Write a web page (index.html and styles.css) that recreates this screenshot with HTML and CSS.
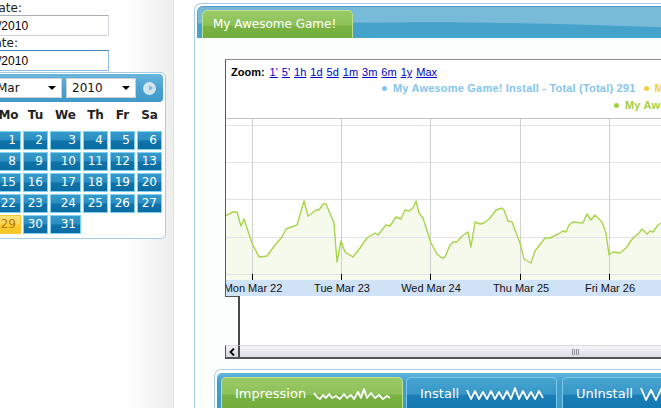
FILE: index.html
```html
<!DOCTYPE html>
<html>
<head>
    <meta charset="UTF-8">
    <title>Game Stats</title>
    <link rel="stylesheet" href="styles.css">
</head>
<body>
    <!-- date filter column -->
    <div class="sidebar">
        <div class="filters">
            <label class="field-label" for="start">Start Date:</label>
            <input class="date-input" type="text" id="start" value="03/22/2010">
            <label class="field-label end" for="end">End Date:</label>
            <input class="date-input focused" type="text" id="end" value="03/29/2010">
            <div class="calendar">
                <div class="cal-head">
                    <span class="cal-nav prev"></span>
                    <div class="cal-select month">Mar<span class="caret"></span></div>
                    <div class="cal-select year">2010<span class="caret"></span></div>
                    <span class="cal-nav next"></span>
                </div>
                <div class="cal-grid">
                    <div class="dow">Su</div><div class="dow">Mo</div><div class="dow">Tu</div><div class="dow">We</div><div class="dow">Th</div><div class="dow">Fr</div><div class="dow">Sa</div>
                    <div class="blank"></div><div class="day">1</div><div class="day">2</div><div class="day">3</div><div class="day">4</div><div class="day">5</div><div class="day">6</div>
                    <div class="day">7</div><div class="day">8</div><div class="day">9</div><div class="day">10</div><div class="day">11</div><div class="day">12</div><div class="day">13</div>
                    <div class="day">14</div><div class="day">15</div><div class="day">16</div><div class="day">17</div><div class="day">18</div><div class="day">19</div><div class="day">20</div>
                    <div class="day">21</div><div class="day">22</div><div class="day">23</div><div class="day">24</div><div class="day">25</div><div class="day">26</div><div class="day">27</div>
                    <div class="day">28</div><div class="day today">29</div><div class="day">30</div><div class="day">31</div>
                </div>
            </div>
        </div>
    </div>

    <!-- game panel -->
    <div class="panel">
        <div class="tab-bar">
            <svg class="wave" viewBox="0 0 560 32" preserveAspectRatio="none">
                <path d="M0,17 L200,16 C280,15 380,18 470,21 L560,22 L560,32 L0,32 Z" fill="#45a2cb"/>
            </svg>
            <div class="tab green top-tab">My Awesome Game!</div>
        </div>

        <div class="chart">
            <div class="chart-main">
                <div class="chart-tools">
                    <div class="zoom-row">
                        <b>Zoom:</b>
                        <a href="#">1'</a><a href="#">5'</a><a href="#">1h</a><a href="#">1d</a><a href="#">5d</a><a href="#">1m</a><a href="#">3m</a><a href="#">6m</a><a href="#">1y</a><a href="#">Max</a>
                    </div>
                    <div class="legend-row first">
                        <span class="legend-item blue"><i></i>My Awesome Game! Install - Total (Total) 291</span>
                        <span class="legend-item yellow"><i></i>My Awesome Game! UnInstall - Total (Total) 18</span>
                    </div>
                    <div class="legend-row second">
                        <span class="legend-item green"><i></i>My Awesome Game! Impression - Total (Total) 1520</span>
                    </div>
                </div>
                <svg class="plot" width="480" height="178" viewBox="0 0 480 178">
                    <rect width="480" height="178" fill="#ffffff"/>
                    <polygon fill="#f5faec" points="-1,98 7,94 11,94 15,108 18,101 26,125 33,139 41,138 49,127 56,119 60,111 71,107 78,83 82,98 85,96 90,92 93,92 97,86 100,86 108,105 111,144 115,123 119,134 127,139 134,130 141,120 149,115 152,117 160,107 164,108 170,99 175,101 179,92 183,93 187,90 190,83 193,95 197,100 205,125 211,136 216,140 219,139 224,127 227,124 231,124 236,118 242,114 245,129 249,104 254,106 258,105 264,100 270,92 276,90 278,92 282,103 286,104 294,125 298,141 305,145 309,133 313,128 319,120 324,120 332,116 337,113 340,114 343,107 347,104 357,105 361,96 365,102 369,97 376,104 380,115 383,137 387,134 394,135 400,130 407,120 413,115 416,111 421,116 424,113 427,114 432,107 435,105 445,98 455,95 470,110 480,112 480,162 -1,162"/>
                    <g stroke="#e2e2ef" stroke-width="1">
                        <line x1="0" y1="7.5" x2="480" y2="7.5"/>
                        <line x1="0" y1="44.5" x2="480" y2="44.5"/>
                        <line x1="0" y1="81.5" x2="480" y2="81.5"/>
                        <line x1="0" y1="119.5" x2="480" y2="119.5"/>
                        <line x1="0" y1="156.5" x2="480" y2="156.5"/>
                    </g>
                    <line x1="0" y1="0.5" x2="480" y2="0.5" stroke="#c2c2c2"/>
                    <g stroke="#d0d0d0" stroke-width="1">
                        <line x1="26.5" y1="1" x2="26.5" y2="156"/>
                        <line x1="115.5" y1="1" x2="115.5" y2="156"/>
                        <line x1="204.5" y1="1" x2="204.5" y2="156"/>
                        <line x1="294.5" y1="1" x2="294.5" y2="156"/>
                        <line x1="383.5" y1="1" x2="383.5" y2="156"/>
                        <line x1="472.5" y1="1" x2="472.5" y2="156"/>
                    </g>
                    <polyline fill="none" stroke="#a6d54b" stroke-width="1.4" stroke-linejoin="round" points="-1,98 7,94 11,94 15,108 18,101 26,125 33,139 41,138 49,127 56,119 60,111 71,107 78,83 82,98 85,96 90,92 93,92 97,86 100,86 108,105 111,144 115,123 119,134 127,139 134,130 141,120 149,115 152,117 160,107 164,108 170,99 175,101 179,92 183,93 187,90 190,83 193,95 197,100 205,125 211,136 216,140 219,139 224,127 227,124 231,124 236,118 242,114 245,129 249,104 254,106 258,105 264,100 270,92 276,90 278,92 282,103 286,104 294,125 298,141 305,145 309,133 313,128 319,120 324,120 332,116 337,113 340,114 343,107 347,104 357,105 361,96 365,102 369,97 376,104 380,115 383,137 387,134 394,135 400,130 407,120 413,115 416,111 421,116 424,113 427,114 432,107 435,105 445,98 455,95 470,110 480,112"/>
                    <rect x="0" y="162" width="480" height="16" fill="#d0e2f6"/>
                    <g stroke="#000000" stroke-width="1">
                        <line x1="26.5" y1="156" x2="26.5" y2="162"/>
                        <line x1="115.5" y1="156" x2="115.5" y2="162"/>
                        <line x1="204.5" y1="156" x2="204.5" y2="162"/>
                        <line x1="294.5" y1="156" x2="294.5" y2="162"/>
                        <line x1="383.5" y1="156" x2="383.5" y2="162"/>
                        <line x1="472.5" y1="156" x2="472.5" y2="162"/>
                    </g>
                    <g class="axis-labels" text-anchor="middle">
                        <text x="27" y="174">Mon Mar 22</text>
                        <text x="116" y="174">Tue Mar 23</text>
                        <text x="205" y="174">Wed Mar 24</text>
                        <text x="295" y="174">Thu Mar 25</text>
                        <text x="384" y="174">Fri Mar 26</text>
                        <text x="473" y="174">Sat Mar 27</text>
                    </g>
                </svg>
            </div>
            <div class="chart-foot">
                <div class="foot-gap"></div>
                <div class="foot-body"></div>
            </div>
            <div class="scrollbar">
                <div class="scroll-btn">
                    <svg width="6" height="8" viewBox="0 0 6 8"><polyline points="5,0.5 1.5,4 5,7.5" fill="none" stroke="#000" stroke-width="1.8"/></svg>
                </div>
                <div class="scroll-track"><span class="grip"></span></div>
            </div>
        </div>

        <div class="bottom-tabs">
            <div class="bottom-bar">
                <div class="tab green stat-tab impression">Impression
                    <svg class="spark" width="78" height="14" viewBox="0 0 78 14"><polyline points="1,6 4,10 7,12 10,8 13,11 16,7 19,11 23,9 27,12 31,7 34,11 38,8 41,12 45,5 48,11 51,2 54,11 58,6 62,11 66,8 70,12 74,9 77,11"/></svg>
                </div>
                <div class="tab blue stat-tab install">Install
                    <svg class="spark" width="78" height="14" viewBox="0 0 78 14"><polyline points="1,3 5,12 9,4 13,12 17,5 21,12 25,4 29,12 33,5 37,12 41,4 45,12 49,1 53,12 57,4 61,12 65,5 69,12 73,4 77,11"/></svg>
                </div>
                <div class="tab blue stat-tab uninstall">UnInstall
                    <svg class="spark" width="78" height="14" viewBox="0 0 78 14"><polyline points="1,1 6,13 11,3 16,13 21,2 26,12 31,4 36,13 41,2 46,12 51,5 56,13 61,3 66,12 71,4 77,12"/></svg>
                </div>
            </div>
        </div>
    </div>
</body>
</html>
```

FILE: styles.css
```css
* {
    box-sizing: border-box;
}
html, body {
    margin: 0;
    height: 100%;
    overflow: hidden;
}
body {
    display: flex;
    align-items: flex-start;
    background-color: #ffffff;
    font-family: "DejaVu Sans", Verdana, sans-serif;
    font-size: 12px;
    color: #222222;
}
/* Sidebar with the date pickers */
.sidebar {
    flex: 0 0 174px;
    height: 408px;
    overflow: hidden;
    border-right: 1px solid #e2e2e2;
    background: linear-gradient(to right, #ffffff 72%, #eeeeee);
}
.filters {
    width: 210px;
    margin-left: -36px;
    padding-top: 1px;
}
.field-label {
    display: block;
    width: 96px;
    margin-left: -38px;
    text-align: right;
    white-space: nowrap;
    line-height: 14px;
}
.field-label.end {
    width: 92px;
}
.date-input {
    display: block;
    width: 145px;
    height: 21px;
    margin: 0;
    padding: 0 3px;
    border: 1px solid #d3d6dd;
    border-top-color: #a9adb5;
    font-family: "Liberation Sans", Arial, sans-serif;
    font-size: 12px;
    color: #000000;
    background: #ffffff;
}
.date-input.focused {
    border-color: #8ebde9;
    border-top-color: #3f80b6;
}
.calendar {
    width: 200px;
    margin: 1px 0 0 2px;
    padding: 1px 2px 4px;
    border: 1px solid #a6cde6;
    border-radius: 5px;
    background: #ffffff;
}
.cal-head {
    display: flex;
    align-items: center;
    height: 28px;
    padding: 0 7px 0 4px;
    border-radius: 4px;
    background: linear-gradient(#68b6dd, #4aa2d0 50%, #3f9acb);
}
.cal-nav {
    display: flex;
    align-items: center;
    justify-content: center;
    width: 13px;
    height: 13px;
    border-radius: 50%;
    background: #d3e5ef;
}
.cal-nav::after {
    content: "";
    margin-left: 2px;
    border-left: 4px solid #8ab7d3;
    border-top: 3px solid transparent;
    border-bottom: 3px solid transparent;
}
.cal-nav.prev::after {
    margin: 0 2px 0 0;
    border-left: 0;
    border-right: 4px solid #8ab7d3;
}
.cal-select {
    display: flex;
    align-items: center;
    justify-content: space-between;
    width: 70px;
    height: 20px;
    padding: 0 5px 0 4px;
    border: 1px solid #d0d0d0;
    background: #ffffff;
    color: #111111;
    font-size: 12px;
}
.cal-select.month {
    margin-left: 6px;
}
.cal-select.year {
    margin-left: 4px;
    padding-left: 5px;
}
.cal-nav.next {
    margin-left: 7px;
}
.caret {
    width: 0;
    height: 0;
    border-left: 4px solid transparent;
    border-right: 4px solid transparent;
    border-top: 4px solid #000000;
}
.cal-grid {
    display: grid;
    grid-template-columns: 25px 25px 25px 31px 25px 25px 25px;
    grid-template-rows: 27px repeat(5, 19px);
    column-gap: 2px;
    row-gap: 2px;
}
.dow {
    font-weight: bold;
    text-align: center;
    line-height: 27px;
    color: #222222;
}
.day {
    border: 1px solid #80d1f1;
    padding-right: 4px;
    text-align: right;
    line-height: 17px;
    color: #ffffff;
    background: linear-gradient(#3599c9, #2b8ec2 48%, #0f73a9 52%, #0a6ca3);
}
.day.today {
    border-color: #f5c63a;
    color: #b9780a;
    background: linear-gradient(#fde27e, #fbd652 48%, #f9cb2c 52%, #f7c622);
}
/* Game panel */
.panel {
    flex: 0 0 560px;
    height: 420px;
    margin: 3px 0 0 20px;
    padding: 2px 0 0 2px;
    border: 1px solid #a7cee6;
    border-right: 0;
    border-radius: 7px 0 0 0;
    background: #fcfefe;
}
.tab-bar {
    position: relative;
    display: flex;
    height: 32px;
    padding: 3px 0 0 4px;
    border-top: 1px solid #4f97c4;
    border-left: 1px solid #5aa0c9;
    border-radius: 6px 0 0 0;
    background: #78bbd9;
    overflow: hidden;
}
.wave {
    position: absolute;
    left: 0;
    top: 0;
    width: 100%;
    height: 100%;
}
.tab {
    position: relative;
    display: flex;
    align-items: center;
    border: 1px solid;
    border-bottom: 0;
    border-radius: 5px 5px 0 0;
    color: #ffffff;
}
.tab.green {
    border-color: #bfe08f;
    background: linear-gradient(#99ca67, #8ec259 52%, #79b242 56%, #73ad3b);
}
.tab.blue {
    border-color: #7cc8ea;
    background: linear-gradient(#46a4d0, #3797c7 52%, #1b7eb6 56%, #1379b1);
}
.top-tab {
    width: 151px;
    height: 28px;
    padding: 0 0 1px 10px;
}
/* Chart */
.chart {
    width: 480px;
    margin: 21px 0 0 28px;
}
.chart-main {
    border-top: 1px solid #8e8e8e;
    border-left: 1px solid #5a5a5a;
    background: #ffffff;
}
.chart-tools {
    height: 58px;
    padding: 4px 0 0 5px;
    font-family: "Liberation Sans", Arial, sans-serif;
    font-size: 11px;
}
.zoom-row {
    display: flex;
    gap: 4px;
    line-height: 16px;
    color: #000000;
}
.zoom-row b {
    margin-right: 1px;
}
.zoom-row a {
    color: #0000cc;
    text-decoration: underline;
}
.legend-row {
    display: flex;
    gap: 8px;
    line-height: 17px;
    font-weight: bold;
    letter-spacing: 0.2px;
    white-space: nowrap;
}
.legend-row.first {
    padding-left: 151px;
}
.legend-row.second {
    padding-left: 383px;
}
.legend-item {
    display: flex;
    align-items: center;
}
.legend-item i {
    width: 5px;
    height: 5px;
    margin-right: 6px;
    border-radius: 50%;
    background: currentColor;
}
.legend-item.blue {
    color: #84c5ec;
}
.legend-item.yellow {
    color: #f2cf3e;
}
.legend-item.green {
    color: #a2d043;
}
.plot {
    display: block;
}
.axis-labels {
    font-family: "Liberation Sans", Arial, sans-serif;
    font-size: 11px;
    fill: #111111;
}
.chart-foot {
    display: flex;
    height: 49px;
}
.foot-gap {
    width: 13px;
    border-top: 1px solid #555555;
}
.foot-body {
    flex: 1;
    border-left: 2px solid #4a4a4a;
    background: #ffffff;
}
.scrollbar {
    display: flex;
    height: 14px;
    border-bottom: 2px solid #555555;
}
.scroll-btn {
    display: flex;
    align-items: center;
    justify-content: center;
    width: 13px;
    border-left: 1px solid #555555;
    border-top: 1px solid #d8d8de;
    background: linear-gradient(#f3f3f6, #d6d7de);
}
.scroll-track {
    flex: 1;
    display: flex;
    align-items: center;
    padding-left: 332px;
    border-left: 2px solid #4a4a4a;
    border-top: 1px solid #dcdce3;
    background: linear-gradient(#f6f6f9, #dcdde4);
}
.grip {
    width: 7px;
    height: 6px;
    background: repeating-linear-gradient(to right, #8a8a96 0 1px, transparent 1px 2px);
}
/* Stat tabs */
.bottom-tabs {
    margin: 10px 0 0 17px;
    padding: 3px 0 0 2px;
    border: 1px solid #a7d0e8;
    border-right: 0;
    border-radius: 7px 0 0 0;
    background: #ffffff;
}
.bottom-bar {
    display: flex;
    gap: 3px;
    height: 40px;
    padding: 4px 0 0 4px;
    border-radius: 5px 0 0 0;
    background: linear-gradient(#63b6dc, #3e9ecc 25%, #3a9aca);
}
.stat-tab {
    height: 32px;
    padding-left: 13px;
    font-size: 13px;
}
.stat-tab.impression {
    width: 182px;
}
.stat-tab.install {
    width: 151px;
}
.stat-tab.uninstall {
    width: 160px;
    margin-left: 2px;
}
.spark {
    margin-left: 7px;
}
.spark polyline {
    fill: none;
    stroke: #ffffff;
    stroke-width: 1.8;
    stroke-linejoin: round;
}
```
